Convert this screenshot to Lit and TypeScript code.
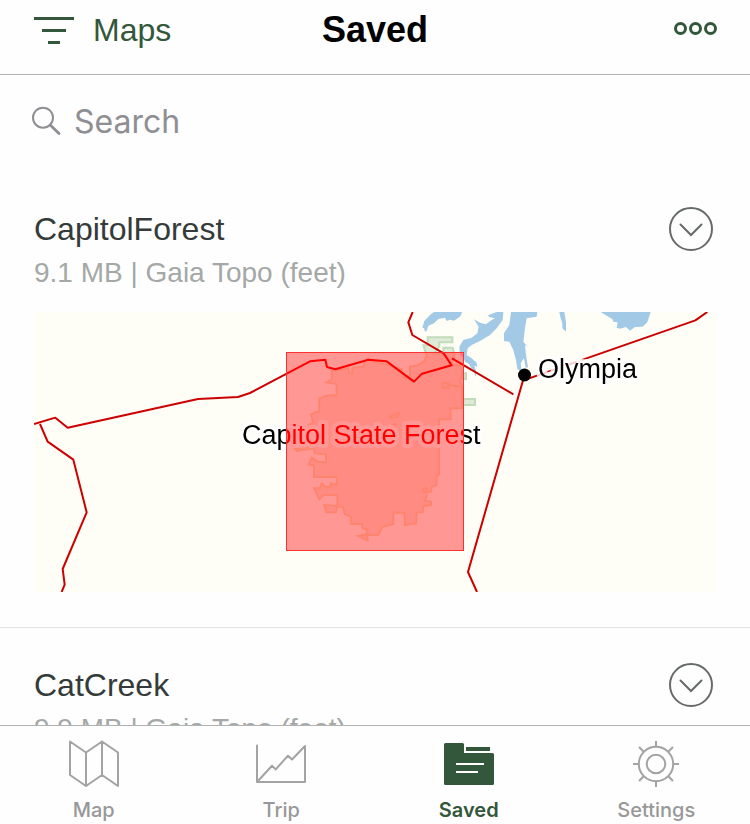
import { LitElement, html, svg, css, nothing } from "lit";
import { customElement, property } from "lit/decorators.js";
import { classMap } from "lit/directives/class-map.js";

interface SavedMap {
  name: string;
  detail: string;
}

const savedMaps: SavedMap[] = [
  { name: "CapitolForest", detail: "9.1 MB | Gaia Topo (feet)" },
  { name: "CatCreek", detail: "9.9 MB | Gaia Topo (feet)" },
];

const mapIcon = svg`
  <path class="line" d="M1 1.5 17 12.5 33 1.5 49 12.5V46L33 35 17 46 1 35ZM17 12.5V46M33 1.5V35" />`;

const tripIcon = svg`
  <path class="line" d="M1 5.5V42H49V6L36 19.5 32 15.7 19.7 29.4 16 25.7 1.5 41.5" />`;

const savedIcon = svg`
  <path class="solid" d="M1.5 3H18.5Q20 3 20 4.5V13H48.5Q50 13 50 14.5V43.5Q50 45 48.5 45H1.5Q0 45 0 43.5V4.5Q0 3 1.5 3Z" />
  <path class="solid" d="M22 7H46V11H22Z" />
  <path class="paper" d="M12 23H40V25H12ZM12 31H34V33H12Z" />`;

const settingsIcon = svg`
  <circle class="line" cx="25" cy="24" r="17.2" />
  <circle class="line" cx="25" cy="24" r="9.3" />
  <path class="line butt" d="M25 1V7M25 41V47M2 24H8M42 24H48M8 7 13 12M37 36 42 41M42 7 37 12M13 36 8 41" />`;

const tabs = [
  { label: "Map", icon: mapIcon },
  { label: "Trip", icon: tripIcon },
  { label: "Saved", icon: savedIcon },
  { label: "Settings", icon: settingsIcon },
];

/** Preview of a downloaded area: base map, place labels and the area's extent. */
@customElement("map-preview")
export class MapPreview extends LitElement {
  static styles = css`
    :host {
      display: block;
    }
    .map {
      display: block;
      width: 100%;
      height: auto;
      isolation: isolate;
    }
    .land {
      fill: #fefdf6;
    }
    .water {
      fill: #a2cae6;
    }
    .forest {
      fill: #e0e8d8;
      stroke: #c0dcb8;
      stroke-width: 6;
    }
    .road {
      fill: none;
      stroke: #cc0000;
      stroke-width: 6;
      stroke-linejoin: round;
    }
    .label {
      font: 27px "Liberation Sans", Arial, sans-serif;
      fill: #000;
      stroke: #fff;
      stroke-opacity: 0.8;
      stroke-width: 8px;
      stroke-linejoin: round;
      paint-order: stroke;
    }
    .tint {
      fill: #ff9999;
      mix-blend-mode: multiply;
    }
    .glow {
      fill: #ff0000;
      mix-blend-mode: lighten;
    }
    .edge {
      fill: none;
      stroke: #ff3030;
      stroke-width: 1;
    }
  `;

  render() {
    return html`
      <svg class="map" viewBox="0 0 682 280" role="img" aria-label="Map of Capitol State Forest">
        <rect class="land" width="682" height="280" />
        <g transform="scale(0.33333) translate(588 -21)">
          <path
            class="forest"
            d="M305 198 355 190 358 205H367V188L400 185 405 170 415 162 430 170 460 176 515 192 520 215 540 222V185L565 180 583 168 590 152 580 121H593V97H667V112H628V122L615 145H640V128H668L674 150 665 178 690 182 697 205 690 228 697 248V310H662V343H627V508L620 512V540L605 545 603 560H580V550H590V572L585 588 603 590V600L580 603 578 622H560L558 655 525 660 523 623H490V657L457 665 445 690H412L413 707 385 693 410 688V673L398 670 396 657H363L362 635 345 628 338 605H322L318 622H290L283 600 322 603V570H280L268 583 252 550H270L275 535 285 545H302V535L320 540V516H252V482L235 478 245 458 262 470 288 472V448L255 445 252 430 200 438 195 432 235 425V360L250 352 243 328 268 318V280L290 272 320 270V237L290 232 305 222Z"
          />
          <path class="forest" d="M480 334 508 323 503 335 483 340ZM638 234H655V248H638ZM655 240 697 245M700 205H708V222H700ZM700 282H735V300H700ZM487 360 495 358V364" />
          <path class="water" d="M577 69 583 48 600 30 612 21H697L690 35 672 47 660 44 650 48 645 38 625 42 612 55 595 62 590 78 585 80 582 69Z" />
          <path
            class="water"
            d="M768 21 775 31 800 21H820L818 45 800 70 780 90 750 108 725 120 713 130 710 150 725 160 740 173 742 185 733 182 740 205 736 215 731 195 722 187 718 177 705 170 700 158 690 150 688 125 700 105 725 98 742 85 746 65 732 43 750 53 768 58 785 45 795 40 778 36Z"
          />
          <path
            class="water"
            d="M843 21 838 60 822 85V108L838 110 850 135 858 165 862 192 875 200 872 175 882 160 887 188 894 187 888 150 885 120 893 125 880 110 885 70 890 40 920 35 922 21Z"
          />
          <path class="water" d="M988 21 992 40 997 55V70L1008 80V52L1003 21Z" />
          <path class="water" d="M1112 21 1135 35 1147 42 1150 50 1163 52 1160 68 1170 71 1188 66 1200 77 1215 66 1238 65 1252 52 1262 21Z" />
          <path class="road" d="M-588 357-524 338-487 368-96 282 24 276 60 264 240 169 286 164 291 186 316 193 415 164 470 169 552 230 576 206 665 181 641 145 547 90 535 52 548 21" />
          <path class="road" d="M-570 357-547 410-470 464-430 622-502 792-496 839-505 861" />
          <path class="road" d="M666 160 850 268" />
          <path class="road" d="M741 861 714 801 883 212 895 221 1050 167 1396 46 1432 21" />
        </g>
        <text class="label" x="504" y="66">Olympia</text>
        <text class="label" x="208" y="132">Capitol State Forest</text>
        <circle cx="490.5" cy="63" r="6.5" />
        <rect class="tint" x="252.5" y="40.5" width="177" height="198" />
        <rect class="glow" x="252.5" y="40.5" width="177" height="198" />
        <rect class="edge" x="252.5" y="40.5" width="177" height="198" />
      </svg>
    `;
  }
}

/** One downloaded map in the list, with an optional preview. */
@customElement("saved-item")
export class SavedItem extends LitElement {
  @property() name = "";
  @property() detail = "";
  @property({ type: Boolean }) preview = false;

  static styles = css`
    :host {
      display: block;
      padding: 35px 34px;
      border-bottom: 1px solid #e3e3e3;
    }
    .head {
      display: flex;
      align-items: center;
      justify-content: space-between;
      padding-right: 3px;
    }
    .name {
      margin: 0;
      font-size: 32px;
      line-height: 44px;
      font-weight: 400;
      color: #353b3a;
    }
    .detail {
      margin: 4px 0 0;
      font-size: 28px;
      line-height: 36px;
      color: #a4a8a6;
    }
    .more {
      flex: none;
      display: block;
      width: 44px;
      height: 44px;
      padding: 0;
      border: 0;
      background: none;
      cursor: pointer;
    }
    .more svg {
      display: block;
      fill: none;
      stroke: #666a69;
      stroke-width: 2;
      stroke-linecap: round;
    }
    .preview {
      margin-top: 21px;
    }
  `;

  render() {
    return html`
      <div class="head">
        <h2 class="name">${this.name}</h2>
        <button class="more" aria-label="Options for ${this.name}">
          <svg width="44" height="44" viewBox="0 0 44 44">
            <circle cx="22" cy="22" r="21" />
            <path d="M11.5 17.5 22 28 32.5 17.5" />
          </svg>
        </button>
      </div>
      <p class="detail">${this.detail}</p>
      ${this.preview ? html`<map-preview class="preview"></map-preview>` : nothing}
    `;
  }
}

@customElement("app-root")
export class AppRoot extends LitElement {
  static styles = css`
    :host {
      display: flex;
      flex-direction: column;
      height: 100vh;
      background: #fefefe;
      font-family: "Liberation Sans", Arial, sans-serif;
    }
    button {
      display: flex;
      align-items: center;
      padding: 0;
      border: 0;
      background: none;
      font: inherit;
      color: inherit;
      cursor: pointer;
    }
    svg {
      display: block;
      flex: none;
    }
    .bar {
      flex: none;
      display: grid;
      grid-template-columns: 1fr auto 1fr;
      align-items: center;
      height: 60px;
      padding: 0 32px 14px;
      border-bottom: 1px solid #b0b2b1;
      color: #33573a;
    }
    .filter {
      gap: 19px;
      justify-self: start;
      padding-left: 2px;
      font-size: 32px;
      line-height: 40px;
    }
    .title {
      margin: 0;
      font-size: 36px;
      line-height: 40px;
      color: #000;
    }
    .dots {
      justify-self: end;
    }
    .dots svg {
      fill: none;
      stroke: currentColor;
      stroke-width: 3;
    }
    .list {
      flex: 1;
      min-height: 0;
      overflow: auto;
      scrollbar-width: none;
    }
    .search {
      display: flex;
      align-items: center;
      gap: 12px;
      padding: 16px 32px 21px;
      color: #8e8e93;
    }
    .search svg {
      fill: none;
      stroke: currentColor;
    }
    .field {
      flex: 1;
      min-width: 0;
      height: 60px;
      padding: 0;
      border: 0;
      outline: 0;
      background: none;
      font-family: Inter, sans-serif;
      font-size: 32px;
      color: #353b3a;
    }
    .field::placeholder {
      color: #8e8e93;
      opacity: 1;
    }
    .tabs {
      flex: none;
      display: grid;
      grid-template-columns: repeat(4, 1fr);
      padding: 14px 0 2px;
      border-top: 1px solid #b0b2b1;
      background: #fefefe;
    }
    .tab {
      flex-direction: column;
      gap: 10px;
      font-family: Inter, sans-serif;
      font-size: 20px;
      line-height: 24px;
      font-weight: 500;
      color: #989898;
    }
    .tab.current {
      font-weight: 600;
      color: #33573a;
    }
    .line {
      fill: none;
      stroke: #a3a3a3;
      stroke-width: 2;
      stroke-linecap: round;
      stroke-linejoin: round;
    }
    .butt {
      stroke-linecap: butt;
    }
    .solid {
      fill: #33573a;
    }
    .paper {
      fill: #fefefe;
    }
  `;

  render() {
    return html`
      <header class="bar">
        <button class="filter">
          <svg width="40" height="27" viewBox="0 0 40 27" fill="currentColor" aria-hidden="true">
            <path d="M0 0H40V3H0ZM8 12H32V15H8ZM14 24H26V27H14Z" />
          </svg>
          Maps
        </button>
        <h1 class="title">Saved</h1>
        <button class="dots" aria-label="More">
          <svg width="44" height="16" viewBox="0 0 44 16">
            <circle cx="6.5" cy="6.5" r="5" />
            <circle cx="21.5" cy="6.5" r="5" />
            <circle cx="36.5" cy="6.5" r="5" />
          </svg>
        </button>
      </header>
      <main class="list">
        <label class="search">
          <svg width="30" height="30" viewBox="0 0 30 30" aria-hidden="true">
            <circle cx="11" cy="11.7" r="10" stroke-width="2" />
            <path d="M18.5 19.2 27 27.5" stroke-width="2.8" stroke-linecap="round" />
          </svg>
          <input class="field" type="search" placeholder="Search" aria-label="Search" />
        </label>
        ${savedMaps.map(
          (m, i) => html`<saved-item .name=${m.name} .detail=${m.detail} .preview=${i === 0}></saved-item>`
        )}
      </main>
      <nav class="tabs">
        ${tabs.map(
          (t) => html`
            <button class=${classMap({ tab: true, current: t.label === "Saved" })}>
              <svg width="50" height="48" viewBox="0 0 50 48" aria-hidden="true">${t.icon}</svg>
              ${t.label}
            </button>
          `
        )}
      </nav>
    `;
  }
}
